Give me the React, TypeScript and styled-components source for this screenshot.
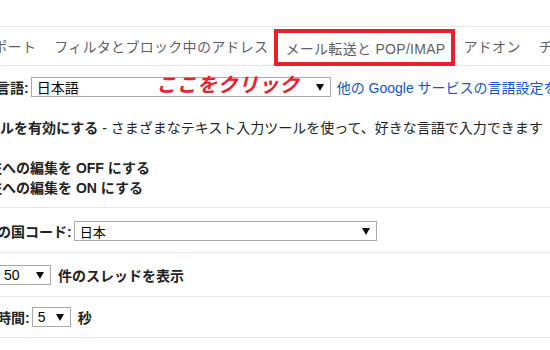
import React from "react";
import styled, { createGlobalStyle } from "styled-components";

const GlobalStyle = createGlobalStyle`
  html, body {
    margin: 0;
    padding: 0;
    background: #fff;
    overflow: hidden;
  }
  body {
    width: 550px;
    height: 350px;
    font-family: "Liberation Sans", "Noto Sans CJK JP", sans-serif;
    color: #222;
  }
`;

const Page = styled.div`
  width: 550px;
  padding-top: 26px;
  overflow: hidden;
`;

const TabBar = styled.nav`
  display: flex;
  align-items: stretch;
  height: 38px;
  border-top: 1px solid #e5e5e5;
  border-bottom: 1px solid #e5e5e5;
  white-space: nowrap;
`;

const Tab = styled.div<{ $active?: boolean; $shift?: number }>`
  display: flex;
  align-items: center;
  font-size: 14px;
  letter-spacing: 0.3px;
  color: #5f5f5f;
  box-sizing: border-box;
  flex-shrink: 0;
  padding: ${(p) => (p.$active ? "0 5px 0 7px" : "0 9px")};
  margin-left: ${(p) => (p.$shift ? `${p.$shift}px` : "0")};
  border: ${(p) => (p.$active ? "4px solid #e8202a" : "none")};
  margin-top: ${(p) => (p.$active ? "2px" : "0")};
  margin-bottom: ${(p) => (p.$active ? "-1px" : "0")};
`;

const Section = styled.section<{ $top: number; $bottom: number }>`
  position: relative;
  display: flex;
  flex-direction: column;
  padding: ${(p) => `${p.$top}px 0 ${p.$bottom}px`};
  border-bottom: 1px solid #e5e5e5;
`;

const Line = styled.div<{ $shift?: number; $gap?: number }>`
  display: flex;
  align-items: center;
  height: 20px;
  font-size: 14px;
  white-space: nowrap;
  margin-left: ${(p) => (p.$shift ? `${p.$shift}px` : "0")};
  margin-top: ${(p) => (p.$gap ? `${p.$gap}px` : "0")};
  gap: 2px;
`;

const Label = styled.b`
  font-weight: bold;
  color: #222;
`;

const Plain = styled.span`
  color: #222;
  margin-left: 2px;
`;

const Link = styled.a`
  color: #15c;
  text-decoration: none;
  margin-left: 4px;
  cursor: pointer;
`;

const Select = styled.div<{ $width: number }>`
  display: flex;
  align-items: center;
  justify-content: space-between;
  box-sizing: border-box;
  width: ${(p) => p.$width}px;
  height: 20px;
  padding: 0 6px 0 5px;
  border: 1px solid #a9a9a9;
  background: #fff;
  flex-shrink: 0;
`;

const SelectValue = styled.span<{ $size?: number }>`
  font-size: ${(p) => p.$size ?? 13}px;
  color: #000;
`;

const Arrow = styled.span`
  width: 0;
  height: 0;
  border-left: 4px solid transparent;
  border-right: 4px solid transparent;
  border-top: 7px solid #111;
`;

const Callout = styled.span`
  position: absolute;
  left: 156px;
  top: 8px;
  font-size: 20px;
  line-height: 22px;
  font-weight: bold;
  font-style: italic;
  color: #e8202a;
  letter-spacing: 0.5px;
  white-space: nowrap;
  pointer-events: none;
`;

const Trailing = styled.span`
  margin-left: 5px;
  font-weight: bold;
`;

export default function App() {
  return (
    <>
      <GlobalStyle />
      <Page>
        <TabBar>
          <Tab $shift={-30}>サポート</Tab>
          <Tab>フィルタとブロック中のアドレス</Tab>
          <Tab $active $shift={-3}>メール転送と POP/IMAP</Tab>
          <Tab>アドオン</Tab>
          <Tab>チャットと Meet</Tab>
        </TabBar>

        <Section $top={11} $bottom={10}>
          <Line $shift={-4}>
            <Label>言語:</Label>
            <Select $width={300}>
              <SelectValue $size={14}>日本語</SelectValue>
              <Arrow />
            </Select>
            <Link>他の Google サービスの言語設定を変更</Link>
          </Line>
          <Callout>ここをクリック</Callout>
          <Line $gap={20}>
            <Label>ルを有効にする</Label>
            <Plain>- さまざまなテキスト入力ツールを使って、好きな言語で入力できます</Plain>
          </Line>
          <Line $gap={20} $shift={-12}>
            <Label>左への編集を OFF にする</Label>
          </Line>
          <Line $shift={-12}>
            <Label>左への編集を ON にする</Label>
          </Line>
        </Section>

        <Section $top={13} $bottom={11}>
          <Line $shift={-3}>
            <Label>の国コード:</Label>
            <Select $width={303}>
              <SelectValue>日本</SelectValue>
              <Arrow />
            </Select>
          </Line>
        </Section>

        <Section $top={12} $bottom={11}>
          <Line $shift={-2}>
            <Select $width={53}>
              <SelectValue $size={14}>50</SelectValue>
              <Arrow />
            </Select>
            <Trailing>件のスレッドを表示</Trailing>
          </Line>
        </Section>

        <Section $top={10} $bottom={10}>
          <Line $shift={-3}>
            <Label>時間:</Label>
            <Select $width={39}>
              <SelectValue $size={14}>5</SelectValue>
              <Arrow />
            </Select>
            <Trailing>秒</Trailing>
          </Line>
        </Section>
      </Page>
    </>
  );
}
